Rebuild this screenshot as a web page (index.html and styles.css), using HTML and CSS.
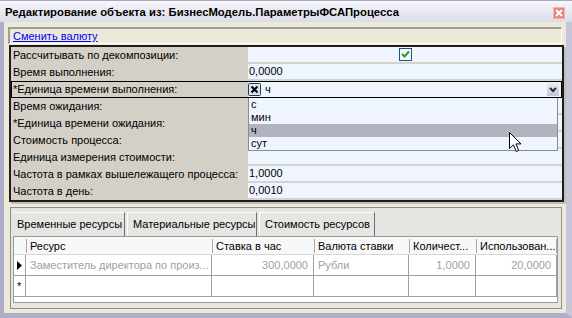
FILE: index.html
```html
<!DOCTYPE html>
<html lang="ru">
<head>
    <meta charset="UTF-8">
    <title>Редактирование объекта</title>
    <link rel="stylesheet" href="styles.css">
</head>
<body>
    <div class="window">
        <div class="titlebar">
            <span class="title">Редактирование объекта из: БизнесМодель.ПараметрыФСАПроцесса</span>
            <span class="close-btn">
                <svg width="12" height="12" viewBox="0 0 12 12">
                    <path d="M3 3 L9 9 M9 3 L3 9" stroke="#fff" stroke-width="2"/>
                </svg>
            </span>
        </div>
        <div class="frame">
            <div class="link-panel"><a href="#">Сменить валюту</a></div>

            <div class="grid">
                <div class="row">
                    <div class="label">Рассчитывать по декомпозиции:</div>
                    <div class="value center">
                        <svg class="check" width="13" height="13" viewBox="0 0 13 13">
                            <rect x="0.5" y="0.5" width="12" height="12" fill="#f4f6f8" stroke="#1c5180"/>
                            <path d="M3 6 L5.5 8.5 L10 3.5" fill="none" stroke="#21a121" stroke-width="2"/>
                        </svg>
                    </div>
                </div>
                <div class="row">
                    <div class="label">Время выполнения:</div>
                    <div class="value">0,0000</div>
                </div>
                <div class="row selected">
                    <div class="label">*Единица времени выполнения:</div>
                    <div class="value combo">
                        <svg width="13" height="13" viewBox="0 0 13 13">
                            <rect x="0.5" y="0.5" width="12" height="12" rx="1" fill="#dfe4ec" stroke="#1c3a6a"/>
                            <path d="M3.5 3.5 L9.5 9.5 M9.5 3.5 L3.5 9.5" stroke="#000" stroke-width="2"/>
                        </svg>
                        <span class="combo-text">ч</span>
                        <span class="drop-btn">
                            <svg width="12" height="13" viewBox="0 0 12 13">
                                <path d="M3 5 L6 8 L9 5" fill="none" stroke="#2a2a3a" stroke-width="2"/>
                            </svg>
                        </span>
                    </div>
                </div>
                <div class="row">
                    <div class="label">Время ожидания:</div>
                    <div class="value"></div>
                </div>
                <div class="row">
                    <div class="label">*Единица времени ожидания:</div>
                    <div class="value"></div>
                </div>
                <div class="row">
                    <div class="label">Стоимость процесса:</div>
                    <div class="value"></div>
                </div>
                <div class="row">
                    <div class="label">Единица измерения стоимости:</div>
                    <div class="value"></div>
                </div>
                <div class="row">
                    <div class="label">Частота в рамках вышележащего процесса:</div>
                    <div class="value">1,0000</div>
                </div>
                <div class="row">
                    <div class="label">Частота в день:</div>
                    <div class="value">0,0010</div>
                </div>

                <ul class="drop-list">
                    <li>с</li>
                    <li>мин</li>
                    <li class="hl">ч</li>
                    <li>сут</li>
                </ul>
                <svg class="cursor" width="13" height="21" viewBox="0 0 13 21">
                    <path d="M0.5 0.5 L0.5 16.5 L4.5 12.8 L7.2 19.5 L9.6 18.5 L7 11.9 L12 11.9 Z" fill="#fff" stroke="#000"/>
                </svg>
            </div>

            <div class="tab-panel">
                <div class="tabs">
                    <div class="tab active">Временные ресурсы</div>
                    <div class="tab">Материальные ресурсы</div>
                    <div class="tab">Стоимость ресурсов</div>
                </div>
                <div class="table">
                    <div class="trow head">
                        <div class="cell ind"></div>
                        <div class="cell"><span>Ресурс</span></div>
                        <div class="cell"><span>Ставка в час</span></div>
                        <div class="cell"><span>Валюта ставки</span></div>
                        <div class="cell"><span>Количест...</span></div>
                        <div class="cell last"><span>Использован...</span></div>
                    </div>
                    <div class="trow data">
                        <div class="cell ind">
                            <svg width="5" height="9" viewBox="0 0 5 9"><path d="M0 0 L5 4.5 L0 9 Z" fill="#000"/></svg>
                        </div>
                        <div class="cell">Заместитель директора по произ...</div>
                        <div class="cell num">300,0000</div>
                        <div class="cell">Рубли</div>
                        <div class="cell num">1,0000</div>
                        <div class="cell num">20,0000</div>
                    </div>
                    <div class="trow data">
                        <div class="cell ind star">*</div>
                        <div class="cell"></div>
                        <div class="cell"></div>
                        <div class="cell"></div>
                        <div class="cell"></div>
                        <div class="cell"></div>
                    </div>
                </div>
            </div>
        </div>
    </div>
</body>
</html>
```

FILE: styles.css
```css
body {
    margin: 0;
    font-family: 'Liberation Sans', Arial, sans-serif;
    font-size: 11px;
    color: #000;
}
.window {
    width: 572px;
    height: 318px;
    background: #ece9d8;
    overflow: hidden;
}
.titlebar {
    height: 22px;
    box-sizing: border-box;
    border-top: 1px solid #a8a8c4;
    background: linear-gradient(#f6f6fb, #dcdce8);
    display: flex;
    align-items: center;
    padding-left: 5px;
}
.title {
    font-weight: bold;
    font-size: 11.3px;
    flex: 1;
}
.close-btn {
    width: 12px;
    height: 12px;
    margin-right: 7px;
    margin-top: 3px;
    background: #e4857c;
    border: 1px solid #f3b4ae;
    box-sizing: border-box;
    display: flex;
}
.close-btn svg {
    margin: -1px;
}
.frame {
    height: 296px;
    box-sizing: border-box;
    border-left: 4px solid #aeaecb;
    border-right: 6px solid #c6c6da;
    border-bottom: 5px solid #aeaecb;
    padding-top: 5px;
}
.link-panel {
    margin-left: 4px;
    width: 554px;
    height: 17px;
    box-sizing: border-box;
    border-top: 2px solid #9d9d9d;
    border-left: 2px solid #9d9d9d;
    border-right: 1px solid #fff;
    border-bottom: 1px solid #fff;
    padding-left: 3px;
    line-height: 14px;
}
.link-panel a {
    color: #0000ff;
}
.grid {
    margin-top: 1px;
    margin-left: 5px;
    width: 551px;
    border: 2px solid #1e1e1e;
    box-shadow: 2px 2px 0 #c2bfb2;
    position: relative;
}
.row {
    display: flex;
    height: 17px;
    background: #d4d0c8;
}
.row.selected {
    outline: 1px solid #000;
    outline-offset: -1px;
}
.label {
    width: 237px;
    padding-left: 2px;
    box-sizing: border-box;
    line-height: 17px;
    white-space: nowrap;
    overflow: hidden;
}
.value {
    flex: 1;
    background: #eef5fe;
    border-bottom: 2px solid #d6d3ca;
    line-height: 15px;
    padding-left: 1px;
}
.value.center {
    display: flex;
    justify-content: center;
    align-items: center;
}
.row.selected .value {
    border-bottom: none;
    border-right: 1px solid #000;
    display: flex;
    align-items: center;
    padding-left: 0;
}
.combo-text {
    margin-left: 4px;
    flex: 1;
}
.drop-btn {
    width: 12px;
    height: 13px;
    margin-right: 2px;
    background: linear-gradient(#ececf2, #c4c4d0);
    display: flex;
}
.drop-list {
    position: absolute;
    left: 237px;
    top: 51px;
    width: 310px;
    margin: 0;
    padding: 0;
    list-style: none;
    background: #eef5fe;
    border: 1px solid #8c8c8c;
    border-top: none;
    box-sizing: border-box;
}
.drop-list li {
    height: 13px;
    line-height: 13px;
    padding-left: 2px;
}
.drop-list li.hl {
    background: #b1b3bf;
}
.cursor {
    position: absolute;
    left: 498px;
    top: 85px;
}
.tab-panel {
    margin-top: 5px;
    margin-left: 6px;
    width: 552px;
    height: 102px;
    box-sizing: border-box;
    border: 1px solid #8e8e8e;
    background: #e6e5e2;
    padding: 4px 2px 0 2px;
}
.tabs {
    display: flex;
    height: 24px;
    gap: 2px;
}
.tab {
    padding: 0 0 0 5px;
    line-height: 23px;
    white-space: nowrap;
    border-right: 1px solid #6e6e6e;
    border-left: 1px solid #fff;
    border-top: 1px solid #fff;
    box-sizing: border-box;
}
.tab.active {
    border-left-color: transparent;
    padding-left: 3px;
    width: 112px;
}
.tab:nth-child(2) {
    width: 130px;
}
.tab:nth-child(3) {
    width: 116px;
}
.table {
    width: 545px;
    height: 67px;
    box-sizing: border-box;
    border: 1px solid #9a9a9a;
    background: #fff;
}
.trow {
    display: grid;
    grid-template-columns: 12px 186px 102px 95px 67px 81px;
}
.trow.head {
    height: 18px;
    background: #f8f8f8;
    border-bottom: 1px solid #d8d8d8;
    box-sizing: border-box;
}
.trow.head .cell {
    display: flex;
    align-items: center;
}
.trow.head .cell span {
    display: block;
    border-left: 1px solid #a8a8a8;
    line-height: 14px;
    padding-left: 3px;
    white-space: nowrap;
}
.trow.head .cell.last {
    border-right: 1px solid #a8a8a8;
    height: 14px;
    margin-top: 2px;
}
.trow.data {
    height: 21px;
    box-sizing: border-box;
    border-bottom: 1px solid #a0a0a0;
}
.trow.data .cell {
    border-right: 1px solid #a0a0a0;
    line-height: 20px;
    color: #a0a0a0;
    padding-left: 4px;
    white-space: nowrap;
    overflow: hidden;
}
.trow.data .cell.num {
    text-align: right;
    padding-right: 5px;
}
.trow.data .cell.ind {
    padding-left: 3px;
    display: flex;
    align-items: center;
    color: #000;
}
```
